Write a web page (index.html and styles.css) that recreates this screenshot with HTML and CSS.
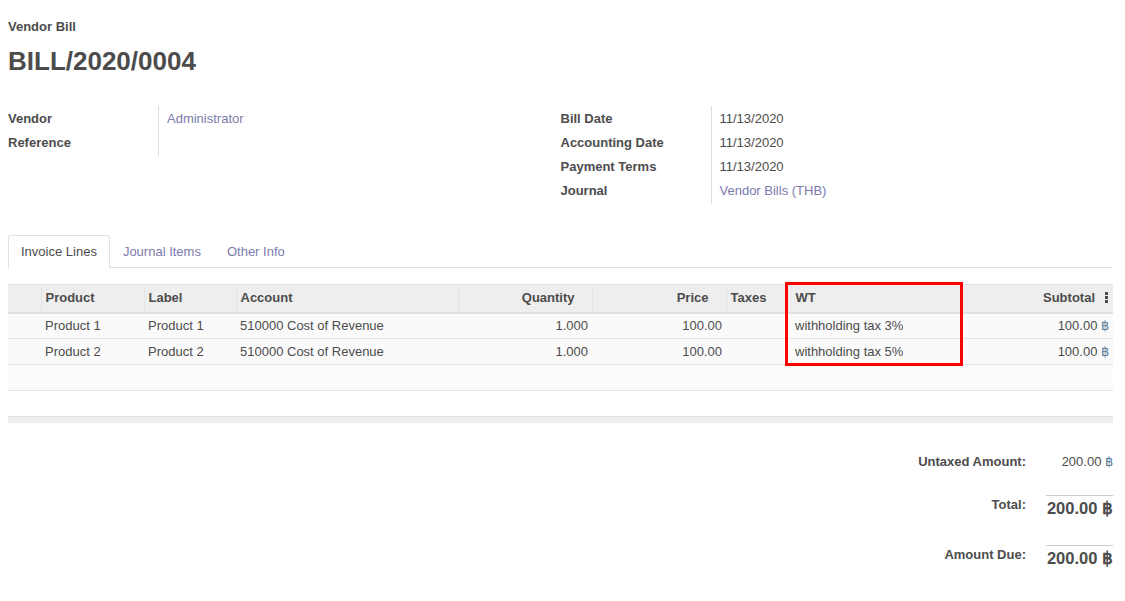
FILE: index.html
```html
<!DOCTYPE html>
<html>
<head>
<meta charset="utf-8">
<link rel="stylesheet" href="styles.css">
</head>
<body>
<div class="sheet">
  <div class="doc-type">Vendor Bill</div>
  <h1 class="doc-name">BILL/2020/0004</h1>

  <div class="groups">
    <div class="group">
      <div class="labels">
        <div class="lbl">Vendor</div>
        <div class="lbl">Reference</div>
      </div>
      <div class="values">
        <div class="val link">Administrator</div>
        <div class="val"></div>
      </div>
    </div>
    <div class="group">
      <div class="labels">
        <div class="lbl">Bill Date</div>
        <div class="lbl">Accounting Date</div>
        <div class="lbl">Payment Terms</div>
        <div class="lbl">Journal</div>
      </div>
      <div class="values">
        <div class="val">11/13/2020</div>
        <div class="val">11/13/2020</div>
        <div class="val">11/13/2020</div>
        <div class="val link">Vendor Bills (THB)</div>
      </div>
    </div>
  </div>

  <div class="tabs">
    <div class="tab active">Invoice Lines</div>
    <div class="tab">Journal Items</div>
    <div class="tab">Other Info</div>
  </div>

  <div class="table-wrap">
    <table class="lines">
      <colgroup>
        <col class="c-handle"><col class="c-product"><col class="c-label"><col class="c-account">
        <col class="c-qty"><col class="c-price"><col class="c-taxes"><col class="c-wt"><col class="c-sub">
      </colgroup>
      <thead>
        <tr>
          <th></th>
          <th>Product</th>
          <th>Label</th>
          <th>Account</th>
          <th class="num">Quantity</th>
          <th class="num">Price</th>
          <th>Taxes</th>
          <th class="wt">WT</th>
          <th class="num sub">Subtotal<span class="kebab"></span></th>
        </tr>
      </thead>
      <tbody>
        <tr>
          <td></td><td>Product 1</td><td>Product 1</td><td>510000 Cost of Revenue</td>
          <td class="num">1.000</td><td class="num">100.00</td><td></td><td class="wt">withholding tax 3%</td>
          <td class="num">100.00 <span class="cur">฿</span></td>
        </tr>
        <tr>
          <td></td><td>Product 2</td><td>Product 2</td><td>510000 Cost of Revenue</td>
          <td class="num">1.000</td><td class="num">100.00</td><td></td><td class="wt">withholding tax 5%</td>
          <td class="num">100.00 <span class="cur">฿</span></td>
        </tr>
        <tr class="empty">
          <td colspan="9"></td>
        </tr>
      </tbody>
    </table>
    <div class="highlight"></div>
  </div>
  <div class="table-foot"></div>

  <div class="totals">
    <div class="trow">
      <div class="tlabel">Untaxed Amount:</div>
      <div class="tval">200.00 <span class="cur">฿</span></div>
    </div>
    <div class="trow big">
      <div class="tlabel">Total:</div>
      <div class="tval">200.00 ฿</div>
    </div>
    <div class="trow big last">
      <div class="tlabel">Amount Due:</div>
      <div class="tval">200.00 ฿</div>
    </div>
  </div>
</div>
</body>
</html>
```

FILE: styles.css
```css
* { box-sizing: border-box; }
html, body { margin: 0; padding: 0; background: #fff; }
body {
  font-family: "Liberation Sans", Arial, sans-serif;
  font-size: 13px;
  color: #4c4c4c;
}
.sheet {
  padding: 18px 12px 0 8px;
}
.doc-type {
  font-weight: bold;
  font-size: 13px;
  line-height: 18px;
}
.doc-name {
  margin: 7px 0 0 0;
  font-size: 26px;
  line-height: 36px;
  font-weight: bold;
}
.groups {
  display: flex;
  align-items: flex-start;
  margin-top: 27px;
}
.group {
  display: flex;
  width: 553px;
}
.labels {
  width: 151px;
  border-right: 1px solid #ddd;
  padding: 1px 0 1px 0;
}
.lbl {
  font-weight: bold;
  line-height: 24px;
}
.values {
  padding: 1px 0 1px 8px;
}
.val {
  line-height: 24px;
  min-height: 24px;
}
.link { color: #7c7bad; }

.tabs {
  display: flex;
  margin-top: 31px;
  border-bottom: 1px solid #dee2e6;
  height: 33px;
}
.tab {
  color: #7c7bad;
  padding: 0 12px;
  line-height: 31px;
  border: 1px solid transparent;
  border-bottom: none;
}
.tab.active {
  color: #4c4c4c;
  border-color: #dee2e6;
  border-radius: 3px 3px 0 0;
  background: #fff;
  height: 33px;
  margin-bottom: -1px;
}

.table-wrap {
  position: relative;
  margin-top: 16px;
}
.lines {
  width: 100%;
  border-collapse: collapse;
  table-layout: fixed;
}
.c-handle { width: 33px; }
.c-product { width: 103px; }
.c-label { width: 92px; }
.c-account { width: 222px; }
.c-qty { width: 134px; }
.c-price { width: 134px; }
.c-taxes { width: 59px; }
.c-wt { width: 177px; }
.c-sub { width: auto; }

.lines th {
  background: #eee;
  text-align: left;
  font-weight: bold;
  height: 28px;
  padding: 0 4px 2px 4px;
  border-top: 1px solid #dee2e6;
  border-bottom: 2px solid #dee2e6;
  border-left: 1px solid #e3e3e3;
  white-space: nowrap;
}
.lines th:first-child { border-left: none; }
.lines th.num { text-align: right; padding-right: 17px; }
.lines th.sub { padding-right: 5px; }
.lines th.wt, .lines td.wt { padding-left: 10px; }
.kebab {
  display: inline-block;
  width: 3px;
  height: 11px;
  margin-left: 10px;
  vertical-align: -1px;
  background:
    linear-gradient(#4c4c4c, #4c4c4c) 0 0 / 3px 3px no-repeat,
    linear-gradient(#4c4c4c, #4c4c4c) 0 4px / 3px 3px no-repeat,
    linear-gradient(#4c4c4c, #4c4c4c) 0 8px / 3px 3px no-repeat;
}
.lines td {
  height: 26px;
  padding: 0 4px;
  border-bottom: 1px solid #e3e3e8;
  background: #fafafa;
  white-space: nowrap;
}
.lines td.num { text-align: right; }
.lines tr.empty td { height: 26px; background: #fbfbfb; }
.cur { color: #5a7a9a; }

.highlight {
  position: absolute;
  left: 777px;
  top: -2px;
  width: 178px;
  height: 84px;
  border: 3px solid #f00;
}

.table-foot {
  margin-top: 25px;
  height: 7px;
  background: #eee;
  border-top: 1px solid #e0e0e0;
}

.totals {
  margin-top: 30px;
  display: flex;
  flex-direction: column;
  align-items: flex-end;
}
.trow {
  display: flex;
  align-items: flex-start;
}
.tlabel {
  font-weight: bold;
  text-align: right;
  line-height: 18px;
  padding-right: 20px;
}
.tval {
  width: 67px;
  text-align: right;
  line-height: 18px;
  white-space: nowrap;
}
.trow.big { margin-top: 24px; }
.trow.big.last { margin-top: 25px; }
.trow.big .tlabel { padding-top: 1px; }
.trow.big .tval {
  border-top: 1px solid #ccc;
  font-size: 16.5px;
  font-weight: bold;
  line-height: 24px;
  padding-top: 0;
}
```
